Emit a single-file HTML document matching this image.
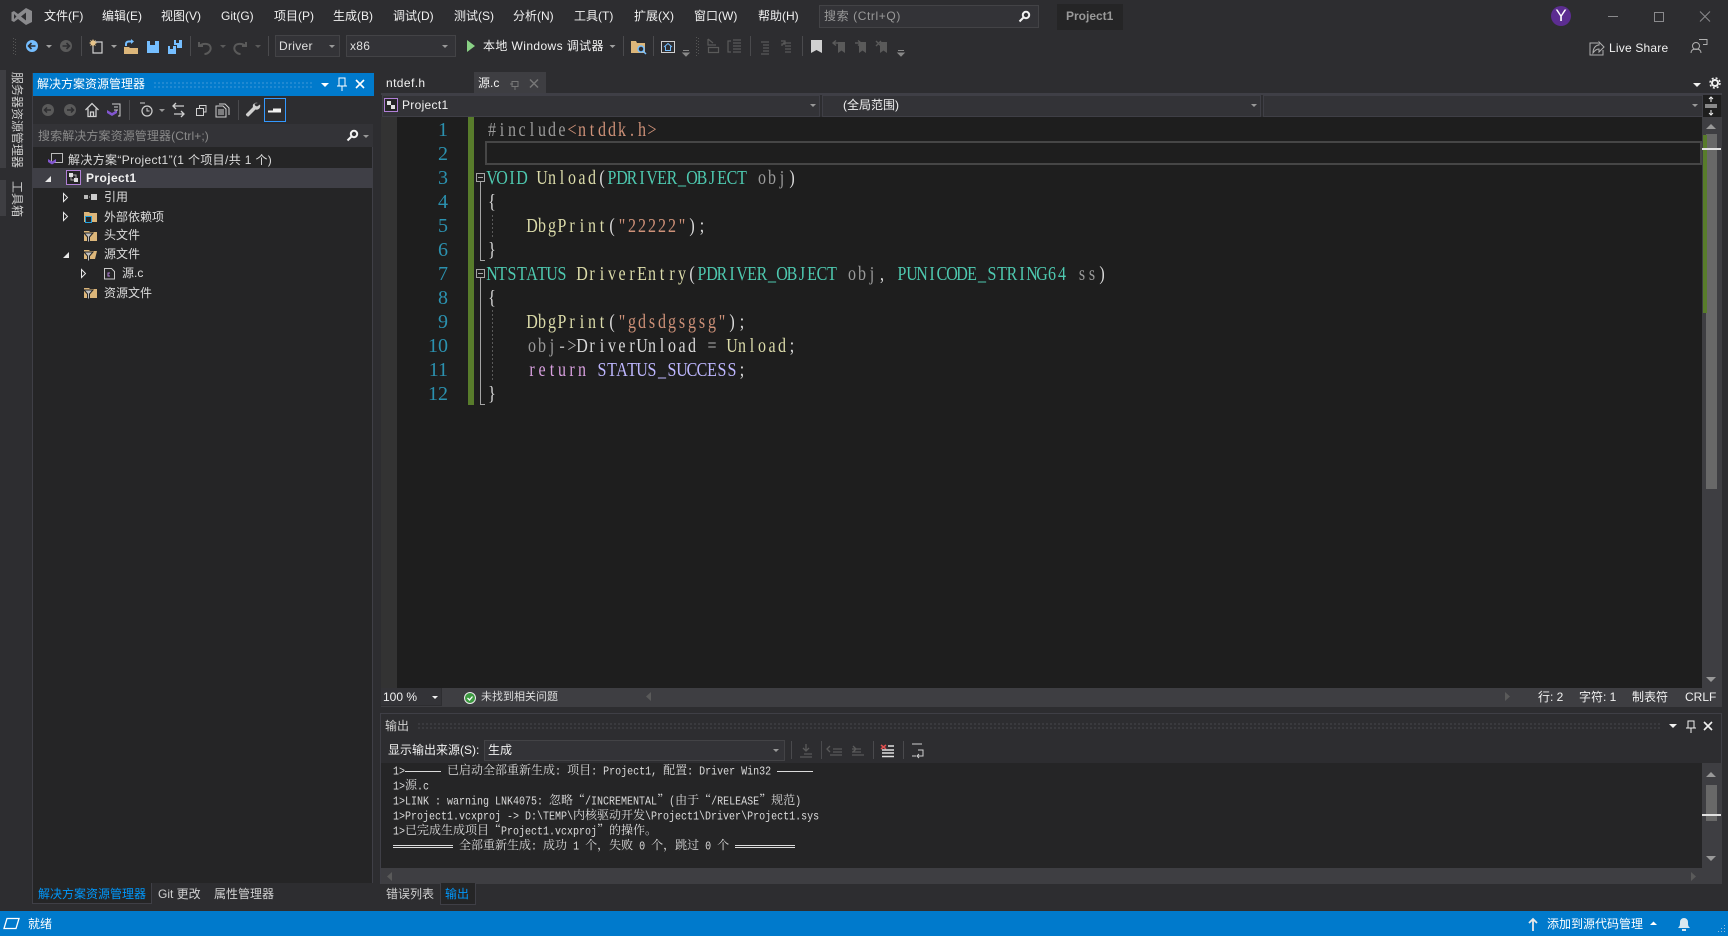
<!DOCTYPE html>
<html lang="zh-CN"><head><meta charset="utf-8"><title>Project1 - Visual Studio</title>
<style>
html,body{margin:0;padding:0;width:1728px;height:936px;overflow:hidden;background:#2d2d30}
body{position:relative;font:12px/16px "Liberation Sans","Noto Sans CJK SC",sans-serif;color:#f1f1f1}
.t{position:absolute;line-height:16px;white-space:nowrap}
.b{position:absolute}
.g{color:#999}
.v{writing-mode:vertical-rl;text-orientation:sideways;color:#ccc}
svg{position:absolute;left:0;top:0}
.code{font-family:"Liberation Serif","Noto Serif CJK SC",serif;font-size:20px;white-space:pre;text-anchor:middle}
.ln{font-family:"Liberation Serif",serif;font-size:20px;fill:#2b91af;text-anchor:end}
.o{position:absolute;left:393px;font:10px/15px "Liberation Mono",monospace;color:#dcdcdc;white-space:pre;height:15px}
.m{display:inline-block;transform:scaleY(1.2);line-height:15px;white-space:pre}
.c{font:12px/15px "Noto Serif CJK SC","Noto Sans CJK SC",serif}
.q{display:inline-block;width:12px;font:12px/15px "Noto Serif CJK SC",serif}
.l1,.l2{display:inline-block;vertical-align:middle}
.l1{height:1px;background:#dcdcdc}
.l2{height:1px;border-top:1px solid #dcdcdc;border-bottom:1px solid #dcdcdc}
</style></head><body>

<!-- side strip -->
<div class="b" style="left:0;top:70px;width:6px;height:98px;background:#3e3e42"></div>
<div class="b" style="left:0;top:180px;width:6px;height:36px;background:#3e3e42"></div>
<div class="t v" style="left:9px;top:72px">服务器资源管理器</div>
<div class="t v" style="left:9px;top:181px">工具箱</div>

<!-- Menu -->
<div class="t" style="left:44px;top:8px">文件(F)</div>
<div class="t" style="left:102px;top:8px">编辑(E)</div>
<div class="t" style="left:161px;top:8px">视图(V)</div>
<div class="t" style="left:221px;top:8px">Git(G)</div>
<div class="t" style="left:274px;top:8px">项目(P)</div>
<div class="t" style="left:333px;top:8px">生成(B)</div>
<div class="t" style="left:393px;top:8px">调试(D)</div>
<div class="t" style="left:454px;top:8px">测试(S)</div>
<div class="t" style="left:513px;top:8px">分析(N)</div>
<div class="t" style="left:574px;top:8px">工具(T)</div>
<div class="t" style="left:634px;top:8px">扩展(X)</div>
<div class="t" style="left:694px;top:8px">窗口(W)</div>
<div class="t" style="left:758px;top:8px">帮助(H)</div>
<div class="b" style="left:819px;top:5px;width:218px;height:21px;background:#333337;border:1px solid #434346"></div>
<div class="t g" style="left:824px;top:8px;letter-spacing:.6px">搜索 (Ctrl+Q)</div>
<div class="b" style="left:1057px;top:4px;width:66px;height:26px;background:#252526"></div>
<div class="t g" style="left:1066px;top:8px;font-weight:bold">Project1</div>
<div class="b" style="left:1551px;top:6px;width:20px;height:20px;border-radius:50%;background:#5c2d91"></div>
<div class="t" style="left:1555px;top:7px;font-size:17px;line-height:18px;color:#fff;width:12px;text-align:center">Y</div>

<!-- Toolbar combos -->
<div class="b" style="left:275px;top:35px;width:63px;height:20px;background:#333337;border:1px solid #434346"></div>
<div class="t" style="left:279px;top:38px;color:#e0e0e0;letter-spacing:.3px">Driver</div>
<div class="b" style="left:346px;top:35px;width:108px;height:20px;background:#333337;border:1px solid #434346"></div>
<div class="t" style="left:350px;top:38px;color:#e0e0e0;letter-spacing:.3px">x86</div>
<div class="t" style="left:483px;top:38px;letter-spacing:.4px">本地 Windows 调试器</div>
<div class="t" style="left:1609px;top:40px;color:#f1f1f1;letter-spacing:.2px">Live Share</div>

<!-- Solution Explorer -->
<div class="b" style="left:32px;top:73px;width:341px;height:810px;background:#252526;border-left:1px solid #3f3f46;border-right:1px solid #3f3f46;box-sizing:border-box"></div>
<div class="b" style="left:33px;top:73px;width:341px;height:23px;background:#007acc"></div>
<div class="t" style="left:37px;top:76px;color:#fff">解决方案资源管理器</div>
<div class="b" style="left:153px;top:81px;width:160px;height:8px;background:radial-gradient(circle,#3d97d8 .7px,transparent .9px) 0 0/4px 4px"></div>
<div class="b" style="left:33px;top:96px;width:340px;height:28px;background:#2d2d30"></div>
<div class="b" style="left:33px;top:124px;width:340px;height:23px;background:#333337"></div>
<div class="t" style="left:38px;top:128px;color:#8a8a8a;letter-spacing:.1px">搜索解决方案资源管理器(Ctrl+;)</div>
<div class="b" style="left:264px;top:98px;width:20px;height:22px;border:1px solid #3399ff"></div>
<div class="t" style="left:68px;top:151.500px;color:#dcdcdc;letter-spacing:.35px">解决方案“Project1”(1 个项目/共 1 个)</div>
<div class="b" style="left:33px;top:168px;width:340px;height:20px;background:#3f3f46"></div>
<div class="t" style="left:86px;top:170px;font-weight:bold;color:#f1f1f1;letter-spacing:.4px">Project1</div>
<div class="t" style="left:104px;top:189px;color:#dcdcdc">引用</div>
<div class="t" style="left:104px;top:208.500px;color:#dcdcdc">外部依赖项</div>
<div class="t" style="left:104px;top:227px;color:#dcdcdc">头文件</div>
<div class="t" style="left:104px;top:246px;color:#dcdcdc">源文件</div>
<div class="t" style="left:122px;top:265px;color:#dcdcdc">源.c</div>
<div class="t" style="left:104px;top:284.500px;color:#dcdcdc">资源文件</div>

<!-- Left bottom tabs -->
<div class="b" style="left:32px;top:883px;width:120px;height:21px;background:#252526;border:1px solid #3f3f46;border-top:0;box-sizing:border-box"></div>
<div class="t" style="left:38px;top:886px;color:#0097fb">解决方案资源管理器</div>
<div class="t" style="left:158px;top:886px;color:#d0d0d0">Git 更改</div>
<div class="t" style="left:214px;top:886px;color:#d0d0d0">属性管理器</div>

<!-- Editor tabs -->
<div class="t" style="left:386px;top:75px;color:#f1f1f1;letter-spacing:.4px">ntdef.h</div>
<div class="b" style="left:474px;top:72px;width:72px;height:21px;background:#3e3e42"></div>
<div class="t" style="left:478px;top:75px;color:#f1f1f1">源.c</div>
<div class="b" style="left:381px;top:93px;width:1341px;height:2px;background:#3f3f46"></div>

<!-- Nav bar -->
<div class="b" style="left:381px;top:95px;width:1322px;height:22px;background:#2d2d30"></div>
<div class="b" style="left:382px;top:95px;width:436px;height:20px;background:#333337;border:1px solid #3f3f46;box-sizing:content-box"></div>
<div class="b" style="left:822px;top:95px;width:437px;height:20px;background:#333337;border:1px solid #3f3f46"></div>
<div class="b" style="left:1263px;top:95px;width:438px;height:20px;background:#333337;border:1px solid #3f3f46"></div>
<div class="t" style="left:402px;top:97px;color:#f1f1f1;letter-spacing:.3px">Project1</div>
<div class="t" style="left:843px;top:97px;color:#f1f1f1">(全局范围)</div>

<!-- Editor -->
<div class="b" style="left:381px;top:117px;width:16px;height:571px;background:#333333"></div>
<div class="b" style="left:397px;top:117px;width:1305px;height:571px;background:#1e1e1e"></div>
<div class="b" style="left:468px;top:117px;width:6px;height:288px;background:#587c2b"></div>
<div class="b" style="left:485px;top:141px;width:1213px;height:20px;border:2px solid #464646"></div>
<div class="b" style="left:1703px;top:95px;width:18px;height:22px;background:#1e1e1e"></div>
<div class="b" style="left:1702px;top:117px;width:20px;height:571px;background:#3e3e42"></div>
<div class="b" style="left:1706px;top:134px;width:11px;height:355px;background:#686868"></div>
<div class="b" style="left:1703px;top:135px;width:4px;height:178px;background:#587c2b"></div>
<div class="b" style="left:1702px;top:148px;width:19px;height:2px;background:#e0e0e0"></div>

<!-- Editor status -->
<div class="b" style="left:381px;top:688px;width:1341px;height:19px;background:#3e3e42"></div>
<div class="b" style="left:381px;top:688px;width:60px;height:17px;background:#333337;border-right:1px solid #2d2d30;border-bottom:1px solid #2d2d30"></div>
<div class="t" style="left:383px;top:689px;color:#f1f1f1">100 %</div>
<div class="t" style="left:481px;top:689px;color:#dcdcdc;font-size:11px">未找到相关问题</div>
<div class="t" style="left:1538px;top:689px;color:#f1f1f1">行: 2</div>
<div class="t" style="left:1579px;top:689px;color:#f1f1f1">字符: 1</div>
<div class="t" style="left:1632px;top:689px;color:#f1f1f1">制表符</div>
<div class="t" style="left:1685px;top:689px;color:#f1f1f1">CRLF</div>

<!-- Output panel -->
<div class="b" style="left:380px;top:713px;width:1342px;height:171px;border:1px solid #3f3f46;border-bottom:0;box-sizing:border-box;background:#2d2d30"></div>
<div class="t" style="left:385px;top:718px;color:#d0d0d0">输出</div>
<div class="b" style="left:417px;top:722px;width:1243px;height:8px;background:radial-gradient(circle,#46464a .7px,transparent .9px) 0 0/4px 4px"></div>
<div class="t" style="left:388px;top:742px;color:#f1f1f1">显示输出来源(S):</div>
<div class="b" style="left:484px;top:740px;width:299px;height:19px;background:#333337;border:1px solid #434346"></div>
<div class="t" style="left:488px;top:742px;color:#f1f1f1">生成</div>
<div class="b" style="left:381px;top:763px;width:1321px;height:105px;background:#252526"></div>
<div class="b" style="left:1702px;top:763px;width:20px;height:105px;background:#3e3e42"></div>
<div class="b" style="left:1706px;top:785px;width:11px;height:36px;background:#686868"></div>
<div class="b" style="left:1702px;top:814px;width:19px;height:2px;background:#e0e0e0"></div>
<div class="b" style="left:381px;top:868px;width:1341px;height:16px;background:#3e3e42"></div>

<div class="o" style="top:762px"><span class="m">1&gt;</span><span class="l1" style="width:36px"></span> <span class="c">已启动全部重新生成</span><span class="m">: </span><span class="c">项目</span><span class="m">: Project1, </span><span class="c">配置</span><span class="m">: Driver Win32 </span><span class="l1" style="width:36px"></span></div>
<div class="o" style="top:777px"><span class="m">1&gt;</span><span class="c">源</span><span class="m">.c</span></div>
<div class="o" style="top:792px"><span class="m">1&gt;LINK : warning LNK4075: </span><span class="c">忽略</span><span class="q" style="text-align:right">“</span><span class="m">/INCREMENTAL</span><span class="q">”</span><span class="m">(</span><span class="c">由于</span><span class="q" style="text-align:right">“</span><span class="m">/RELEASE</span><span class="q">”</span><span class="c">规范</span><span class="m">)</span></div>
<div class="o" style="top:807px"><span class="m">1&gt;Project1.vcxproj -&gt; D:\TEMP\</span><span class="c">内核驱动开发</span><span class="m">\Project1\Driver\Project1.sys</span></div>
<div class="o" style="top:822px"><span class="m">1&gt;</span><span class="c">已完成生成项目</span><span class="q" style="text-align:right">“</span><span class="m">Project1.vcxproj</span><span class="q">”</span><span class="c">的操作。</span></div>
<div class="o" style="top:837px"><span class="l2" style="width:60px"></span> <span class="c">全部重新生成</span><span class="m">: </span><span class="c">成功</span><span class="m"> 1 </span><span class="c">个，失败</span><span class="m"> 0 </span><span class="c">个，跳过</span><span class="m"> 0 </span><span class="c">个</span> <span class="l2" style="width:60px"></span></div>

<!-- Bottom tabs -->
<div class="t" style="left:386px;top:886px;color:#d0d0d0">错误列表</div>
<div class="b" style="left:440px;top:883px;width:34px;height:21px;background:#252526;border:1px solid #3f3f46;border-top:0"></div>
<div class="t" style="left:445px;top:886px;color:#0097fb">输出</div>

<!-- Status bar -->
<div class="b" style="left:0;top:911px;width:1728px;height:25px;background:#007acc"></div>
<div class="t" style="left:28px;top:916px;color:#fff">就绪</div>
<div class="t" style="left:1547px;top:916px;color:#fff">添加到源代码管理</div>

<svg width="1728" height="936" viewBox="0 0 1728 936" fill="none">
<!-- code -->
<g class="ln">
<text x="448" y="136">1</text><text x="448" y="160">2</text><text x="448" y="184">3</text><text x="448" y="208">4</text><text x="448" y="232">5</text><text x="448" y="256">6</text><text x="448" y="280">7</text><text x="448" y="304">8</text><text x="448" y="328">9</text><text x="448" y="352">10</text><text x="448" y="376">11</text><text x="448" y="400">12</text>
</g>
<g class="code">
<text transform="translate(487,136) scale(.8,1)" x="6.25 18.75 31.25 43.75 56.25 68.75 81.25 93.75 106.25 118.75 131.25 143.75 156.25 168.75 181.25 193.75 206.25"><tspan fill="#9b9b9b">#include</tspan><tspan fill="#ce9178">&lt;ntddk.h&gt;</tspan></text>
<text transform="translate(487,184) scale(.8,1)" x="6.25 18.75 31.25 43.75 56.25 68.75 81.25 93.75 106.25 118.75 131.25 143.75 156.25 168.75 181.25 193.75 206.25 218.75 231.25 243.75 256.25 268.75 281.25 293.75 306.25 318.75 331.25 343.75 356.25 368.75 381.25"><tspan fill="#4ec9b0">VOID</tspan> <tspan fill="#dcdcaa">Unload</tspan><tspan fill="#dcdcdc">(</tspan><tspan fill="#4ec9b0">PDRIVER_OBJECT</tspan> <tspan fill="#9a9a9a">obj</tspan><tspan fill="#dcdcdc">)</tspan></text>
<text transform="translate(487,208) scale(.8,1)" x="6.25" fill="#dcdcdc">{</text>
<text transform="translate(527,232) scale(.8,1)" x="6.25 18.75 31.25 43.75 56.25 68.75 81.25 93.75 106.25 118.75 131.25 143.75 156.25 168.75 181.25 193.75 206.25 218.75"><tspan fill="#dcdcaa">DbgPrint</tspan><tspan fill="#dcdcdc">(</tspan><tspan fill="#ce9178">"22222"</tspan><tspan fill="#dcdcdc">);</tspan></text>
<text transform="translate(487,256) scale(.8,1)" x="6.25" fill="#dcdcdc">}</text>
<text transform="translate(487,280) scale(.8,1)" x="6.25 18.75 31.25 43.75 56.25 68.75 81.25 93.75 106.25 118.75 131.25 143.75 156.25 168.75 181.25 193.75 206.25 218.75 231.25 243.75 256.25 268.75 281.25 293.75 306.25 318.75 331.25 343.75 356.25 368.75 381.25 393.75 406.25 418.75 431.25 443.75 456.25 468.75 481.25 493.75 506.25 518.75 531.25 543.75 556.25 568.75 581.25 593.75 606.25 618.75 631.25 643.75 656.25 668.75 681.25 693.75 706.25 718.75 731.25 743.75 756.25 768.75"><tspan fill="#4ec9b0">NTSTATUS</tspan> <tspan fill="#dcdcaa">DriverEntry</tspan><tspan fill="#dcdcdc">(</tspan><tspan fill="#4ec9b0">PDRIVER_OBJECT</tspan> <tspan fill="#9a9a9a">obj</tspan><tspan fill="#dcdcdc">,</tspan> <tspan fill="#4ec9b0">PUNICODE_STRING64</tspan> <tspan fill="#9a9a9a">ss</tspan><tspan fill="#dcdcdc">)</tspan></text>
<text transform="translate(487,304) scale(.8,1)" x="6.25" fill="#dcdcdc">{</text>
<text transform="translate(527,328) scale(.8,1)" x="6.25 18.75 31.25 43.75 56.25 68.75 81.25 93.75 106.25 118.75 131.25 143.75 156.25 168.75 181.25 193.75 206.25 218.75 231.25 243.75 256.25 268.75"><tspan fill="#dcdcaa">DbgPrint</tspan><tspan fill="#dcdcdc">(</tspan><tspan fill="#ce9178">"gdsdgsgsg"</tspan><tspan fill="#dcdcdc">);</tspan></text>
<text transform="translate(527,352) scale(.8,1)" x="6.25 18.75 31.25 43.75 56.25 68.75 81.25 93.75 106.25 118.75 131.25 143.75 156.25 168.75 181.25 193.75 206.25 218.75 231.25 243.75 256.25 268.75 281.25 293.75 306.25 318.75 331.25"><tspan fill="#9a9a9a">obj</tspan><tspan fill="#b4b4b4">-&gt;</tspan><tspan fill="#dadada">DriverUnload</tspan> <tspan fill="#b4b4b4">=</tspan> <tspan fill="#dcdcaa">Unload</tspan><tspan fill="#dcdcdc">;</tspan></text>
<text transform="translate(527,376) scale(.8,1)" x="6.25 18.75 31.25 43.75 56.25 68.75 81.25 93.75 106.25 118.75 131.25 143.75 156.25 168.75 181.25 193.75 206.25 218.75 231.25 243.75 256.25 268.75"><tspan fill="#d8a0df">return</tspan> <tspan fill="#beb7ff">STATUS_SUCCESS</tspan><tspan fill="#dcdcdc">;</tspan></text>
<text transform="translate(487,400) scale(.8,1)" x="6.25" fill="#dcdcdc">}</text>
</g>
<!-- folding -->
<g stroke="#a5a5a5" shape-rendering="crispEdges">
<rect x="476.5" y="173.5" width="8" height="8" fill="#1e1e1e"/><path d="M478 177.5h5M480.5 182V260.5H485"/>
<rect x="476.5" y="269.5" width="8" height="8" fill="#1e1e1e"/><path d="M478 273.5h5M480.5 278V404.5H485"/>
</g>
<path d="M492.5 215V238M492.5 310V381" stroke="#5a5a5a" stroke-dasharray="2 2" shape-rendering="crispEdges"/>

<!-- VS logo -->
<path fill="#8a8a8d" fill-rule="evenodd" d="M26 8L32 11V22L26 25L18 19L14 22L11.5 20.8V12.2L14 11L18 14ZM26 12.5L21 16.5L26 20.5ZM14 14V19L16.5 16.5Z"/>
<!-- search mag -->
<g stroke="#f1f1f1" stroke-width="2"><circle cx="1026" cy="15" r="3.2"/><path d="M1023.5 17.5L1019.5 21.5"/></g>
<!-- window controls -->
<g stroke="#8a8a8d" shape-rendering="crispEdges"><path d="M1608 16.5h10"/><rect x="1654.5" y="12.5" width="9" height="9"/></g>
<path d="M1700 11.5L1710 21.5M1710 11.5L1700 21.5" stroke="#8a8a8d"/>

<!-- toolbar grip -->
<path d="M13.5 38V56M15.5 39V56" stroke="#555" stroke-dasharray="1 2"/>
<path d="M696.5 37V56M698.5 38V56" stroke="#555" stroke-dasharray="1 2"/>
<!-- separators -->
<path d="M81.5 36V56M190.5 36V56M268.5 36V56M623.5 36V56M653.5 36V56M750.5 36V56M802.5 36V56" stroke="#4a4a4d" shape-rendering="crispEdges"/>
<!-- back/forward -->
<circle cx="32" cy="46" r="6" fill="#75beff"/><path d="M35.5 46H29M31.5 43L28.5 46L31.5 49" stroke="#2d2d30" stroke-width="1.6"/>
<circle cx="66" cy="46" r="6" fill="#5a5a5a"/><path d="M62.5 46H69M66.5 43L69.5 46L66.5 49" stroke="#2d2d30" stroke-width="1.6"/>
<!-- drops -->
<g fill="#a0a0a0"><path d="M46 45h6l-3 3zM111 45h6l-3 3z"/><path fill="#5a5a5a" d="M220 45h6l-3 3zM255 45h6l-3 3z"/><path d="M609.5 45h6l-3 3z"/></g>
<!-- new project -->
<path d="M95 42h7v11h-9V44" stroke="#d0d0d0" stroke-width="1.2"/><path d="M93 39l1 2 2-1-1 2 2 1-2 1 1 2-2-1-1 2-1-2-2 1 1-2-2-1 2-1-1-2 2 1z" fill="#e8c58a"/>
<!-- open -->
<path d="M124 47h5l1 1h8v6h-14z" fill="#dcb67a"/><path d="M126 46v-2c0-1.500 1-2.500 3-2.500h2" stroke="#75beff" stroke-width="2"/><path d="M131 39v5l3-2.500z" fill="#75beff"/>
<!-- save -->
<path fill="#75beff" fill-rule="evenodd" d="M147 41h12v12h-12zM150 41v4h5v-4z"/>
<path fill="#75beff" fill-rule="evenodd" d="M168 46h8v8h-8zM170 46v3h3v-3zM174 40h8v8h-5v-3h-3zM176 40v3h3v-3z"/>
<!-- undo/redo -->
<path d="M199 42v4h4M199.500 46c3-3 10-3 11 1s-3 7-6 7" stroke="#5a5a5a" stroke-width="2"/>
<path d="M246 42v4h-4M245.500 46c-3-3-10-3-11 1s3 7 6 7" stroke="#5a5a5a" stroke-width="2"/>
<!-- combo arrows -->
<path d="M329 45h6l-3 3zM442 45h6l-3 3zM810 104h6l-3 3zM1251 104h6l-3 3zM1692 104h6l-3 3zM773 749h6l-3 3z" fill="#999"/>
<path d="M432 696h6l-3 3z" fill="#f1f1f1"/>
<!-- play -->
<path d="M467 40L475 46L467 52Z" fill="#89d185"/>
<!-- find in files folder -->
<path d="M631 41h5l1 2h8v10h-14z" fill="#dcb67a"/><circle cx="641" cy="49" r="3" fill="#2d2d30" stroke="#75beff" stroke-width="1.5"/><path d="M643 51L646 54" stroke="#75beff" stroke-width="1.5"/>
<!-- home box -->
<rect x="661.500" y="41.500" width="13" height="11" stroke="#d0d0d0"/><path d="M664 47l4-3.500 4 3.500M665.500 46.500V50.500H670.500V46.500" stroke="#75beff"/>
<path d="M683 50.500h6M683 53h6l-3 3z" stroke="#888" fill="#888"/>
<!-- dim toolbar icons -->
<g stroke="#5a5a5a" stroke-width="1.200">
<path d="M708 39v6h8M708 39l5 4" /><rect x="708.500" y="47.500" width="10" height="5"/>
<path d="M731 41h-3v11h3M733 40h8M733 43h8M733 46h8M733 49h8M733 52h8"/>
<path d="M761 42h8M763 45h6M763 48h6M763 51h6M761 54h8"/>
<path d="M781 41h4v3h-3v2M783 43h8M785 46h6M785 49h6M785 52h6"/>
</g>
<!-- bookmark -->
<path d="M811 40h11v13l-5.500-3-5.500 3z" fill="#d0d0d0"/>
<path d="M838 42h7v11l-3.500-2.500-3.500 2.500zM859 42h7v11l-3.500-2.500-3.500 2.500zM880 42h7v11l-3.500-2.500-3.500 2.500z" fill="#5a5a5a"/>
<path d="M839 43h-6M836 40.500l-3 2.500 3 2.500M855 43h6M858 40.500l3 2.500-3 2.500M876 41l5 5M881 41l-5 5" stroke="#5a5a5a" stroke-width="1.400"/>
<path d="M898 50.500h6M898 53h6l-3 3z" stroke="#888" fill="#888"/>
<!-- live share -->
<path d="M1598 43H1590V55H1603V50" stroke="#b0b0b0"/><path d="M1593 53c0-5 3-8 6-8v-3l5 5-5 5v-3c-2 0-4 1-6 4z" stroke="#b0b0b0" fill="#2d2d30"/>
<!-- feedback -->
<circle cx="1696" cy="46" r="3.500" stroke="#b0b0b0"/><path d="M1691 53c0-3 2-4 5-4s5 1 5 4" stroke="#b0b0b0"/><path d="M1699 39.500h8v5h-4" stroke="#b0b0b0"/>
<!-- editor tab row icons -->
<path d="M1693 83h8l-4 4z" fill="#f1f1f1"/><circle cx="1715" cy="83" r="3" stroke="#f1f1f1" stroke-width="2"/><circle cx="1715" cy="83" r="5" stroke="#f1f1f1" stroke-dasharray="2 2" stroke-width="1.500"/>
<path d="M512 81.500h6v5h-6zM510 84h3M515 87v3" stroke="#777"/><path d="M530 79.500l8 8M538 79.500l-8 8" stroke="#777" stroke-width="1.500"/>
<!-- split button -->
<path d="M1705 105h12M1705 107h12M1711 97v5M1711 110v5M1709 99l2-2 2 2M1709 113l2 2 2-2" stroke="#f1f1f1"/>
<!-- scroll arrows -->
<path d="M1706 129h10l-5-5zM1706 777h10l-5-5z" fill="#999"/><path d="M1706 856h10l-5 5z" fill="#999"/>
<path d="M1706 677h10l-5 5z" fill="#999"/>
<path d="M651 692v9l-5-4.500zM1505 692v9l5-4.500z" fill="#5a5a5a"/>
<path d="M392 872v9l-5-4.500zM1691 872v9l5-4.500z" fill="#5a5a5a"/>
<!-- check -->
<circle cx="470" cy="698" r="5.500" fill="#3c9a40" stroke="#e8e8e8"/><path d="M467.500 698l2 2 3-3.500" stroke="#fff" stroke-width="1.300"/>

<!-- title bar icons solution explorer -->
<path d="M321 83h8l-4 4z" fill="#fff"/><path d="M339 78h6v8h-6zM337 86h10M342 86v5" stroke="#fff"/><path d="M356 80l8 8M364 80l-8 8" stroke="#fff" stroke-width="1.600"/>
<!-- SE toolbar -->
<circle cx="48" cy="110" r="6" fill="#5a5a5a"/><path d="M51 110H45M47 107.500L44.500 110L47 112.500" stroke="#2d2d30" stroke-width="1.500"/>
<circle cx="70" cy="110" r="6" fill="#5a5a5a"/><path d="M67 110H73M71 107.500L73.500 110L71 112.500" stroke="#2d2d30" stroke-width="1.500"/>
<path d="M85.500 110l6.500-6.500 6.500 6.500M88 108.500V116.500H96V108.500M90.500 116.500V112h3v4.500" stroke="#d0d0d0" stroke-width="1.300"/>
<path d="M107 110l5 3v3l-5-3zM112 113l5-3v3l-5 3z" fill="#8256d0"/><path d="M112 104h8v12h-2M114 107h4M114 110h4" stroke="#d0d0d0"/>
<path d="M129.500 100V120" stroke="#4a4a4d" shape-rendering="crispEdges"/><path d="M238.500 100V120" stroke="#4a4a4d" shape-rendering="crispEdges"/>
<circle cx="147" cy="111" r="5" stroke="#d0d0d0" stroke-width="1.200"/><path d="M147 108v3h2.500M140 103h5" stroke="#d0d0d0"/>
<path d="M159 109h6l-3 3z" fill="#999"/>
<path d="M174 106h10M176 103l-3 3 3 3M174 114h10M181 111l3 3-3 3" stroke="#d0d0d0" stroke-width="1.300"/>
<path d="M196.500 108.500h7v7h-7zM199.500 108.500V105.500h6.500V112h-2.500" stroke="#d0d0d0"/>
<path d="M216 106h7l3 3v8h-10zM219 104h6l4 4v7" stroke="#d0d0d0"/><path d="M218 110h6M218 112h6M218 114h6" stroke="#d0d0d0"/>
<path d="M258 103c-3-1-6 1-5 4l-7 7c-.5 1 1.500 3 2.500 2.500l7-7c3 1 5.500-2 4.500-5l-3 2-2-1-.5-2z" fill="#d0d0d0"/>
<path d="M268 110.500h5V108.500h8v4h-13z" fill="#f1f1f1"/>
<!-- SE search -->
<g stroke="#f1f1f1" stroke-width="2"><circle cx="354" cy="134" r="3.200"/><path d="M351.500 136.500L347.500 140.500"/></g>
<path d="M363 135h6l-3 3z" fill="#999"/>
<!-- tree icons -->
<rect x="51.500" y="153.500" width="11" height="9" stroke="#bbb"/><path d="M48 159l4 2.500v3l-4-2.500zM52 161.500l4-2.500v3l-4 2.500z" fill="#8256d0"/>
<path d="M45 182h6v-6z" fill="#e8e8e8"/>
<rect x="66.500" y="170.500" width="14" height="14" fill="#252526" stroke="#b180d7"/><rect x="69" y="173" width="4" height="4" fill="#e0e0e0"/><rect x="74" y="178" width="4" height="4" fill="#e0e0e0"/><path d="M71 177v3h3M73 175h3v3" stroke="#aaa"/>
<path d="M63.500 193.500l4 4-4 4zM63.500 212.500l4 4-4 4zM81.500 269.500l4 4-4 4z" stroke="#e8e8e8"/>
<path d="M63 258h6v-6z" fill="#e8e8e8"/>
<rect x="84" y="195" width="4" height="4" fill="#bbb"/><path d="M89 197h1" stroke="#bbb"/><rect x="91" y="194" width="6" height="6" fill="#ccc"/>
<path d="M84 212h5l1 1h7v9h-13z" fill="#dcb67a"/><rect x="85.500" y="216.500" width="6" height="6" fill="#252526" stroke="#26a0da"/>
<path d="M84 231h5l1 1h7v9h-13z" fill="#dcb67a"/><path d="M84 233h9l-3.500 4v5h-2v-5z" fill="#c0c0c0" stroke="#252526"/>
<path d="M84 250h5l1 1h7l-2 8h-11z" fill="#dcb67a"/><path d="M84 252h9l-3.500 4v5h-2v-5z" fill="#c0c0c0" stroke="#252526"/>
<path d="M84 288h5l1 1h7v9h-13z" fill="#dcb67a"/><path d="M84 290h9l-3.500 4v5h-2v-5z" fill="#c0c0c0" stroke="#252526"/>
<path d="M104.500 268.500h7l3 3v7.500h-10z" stroke="#c8c8c8"/><path d="M110 273h-2v3h2" stroke="#b180d7"/>
<!-- project nav icon -->
<rect x="384.500" y="98.500" width="13" height="13" fill="#252526" stroke="#b180d7"/><rect x="387" y="101" width="4" height="4" fill="#e0e0e0"/><rect x="391" y="105" width="4" height="4" fill="#e0e0e0"/>
<!-- output header icons -->
<path d="M1669 724h8l-4 4z" fill="#f1f1f1"/><path d="M1688 721h6v7h-6zM1686 728h10M1691 728v5" stroke="#f1f1f1"/><path d="M1704 722l8 8M1712 722l-8 8" stroke="#f1f1f1" stroke-width="1.600"/>
<!-- output toolbar -->
<path d="M791.500 741V759M821.500 741V759M873.500 741V759M903.500 741V759" stroke="#4a4a4d" shape-rendering="crispEdges"/>
<g stroke="#5a5a5a" stroke-width="1.300">
<path d="M800 757h12M804 754h8M806 744v7M803 748l3 3 3-3"/>
<path d="M830 746l-3 3 3 3M830 755h12M833 752h9M833 749h9"/>
<path d="M853 746l3 3-3 3M852 755h12M852 752h9M852 749h9"/>
</g>
<path d="M881 745l5 4M886 745l-5 4" stroke="#e05050" stroke-width="1.500"/><path d="M888 746h6M882 750h12M882 753h12M882 756.500h12" stroke="#e0e0e0" stroke-width="1.500"/>
<path d="M912 744h10M912 756h4M918 750h5v6h-6M919 754l-2 2 2 2" stroke="#d0d0d0"/>
<!-- status bar -->
<path d="M7 918.500H19L16 928.500H4Z" stroke="#fff" stroke-width="1.300"/>
<path d="M1533 931V919M1529 923l4-4 4 4" stroke="#e8e8e8" stroke-width="1.800"/>
<path d="M1650 925h7l-3.500-3.500z" fill="#fff"/>
<path d="M1678 928c2-2 2-3 2-6a4 4 0 018 0c0 3 0 4 2 6zM1682 929h4v2h-4z" fill="#d8e8f0"/>
<path d="M1718.500 931.500v.01M1721.500 931.500v.01M1724.500 931.500v.01M1721.500 928.500v.01M1724.500 928.500v.01M1724.500 925.500v.01" stroke="#9bd" stroke-linecap="square"/>
</svg>
</body></html>
